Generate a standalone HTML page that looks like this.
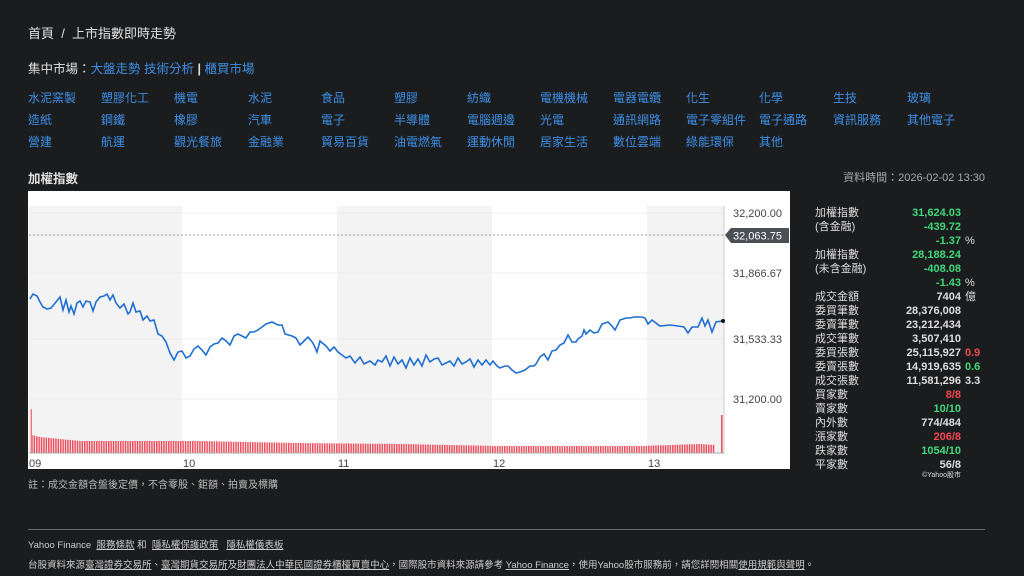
<!DOCTYPE html>
<html><head><meta charset="utf-8"><style>
*{margin:0;padding:0;box-sizing:border-box}
body{width:1024px;height:576px;background:#1b1c1e;font-family:"Liberation Sans","Noto Sans CJK TC",sans-serif;color:#e0e0e0;position:relative;overflow:hidden;font-size:12px}
.a{position:absolute;white-space:nowrap}
.b{color:#3d8fe6}
.sec{position:absolute;left:28px;top:89px;width:960px}
.sec span{position:absolute;color:#3d8fe6;font-size:12px}
.st{position:absolute;left:815px;top:206px;width:170px;font-size:11px}
.st div{height:14px;line-height:14px;position:relative}
.st .l{position:absolute;left:0;color:#ddd}
.st .v{position:absolute;right:24px;font-weight:bold;color:#ddd}
.st .x{position:absolute;left:150px;font-weight:bold;color:#ddd}
.g{color:#3fd87a!important}.r{color:#f0474f!important}
.ft{position:absolute;left:28px;font-size:9.5px;color:#ccc}
.ft u{color:#ccc}
</style></head><body>
<div class="a" style="left:28px;top:23px;font-size:13px">首頁 &nbsp;/&nbsp; 上市指數即時走勢</div>
<div class="a" style="left:28px;top:58px;font-size:12.5px">集中市場：<span class="b">大盤走勢</span> <span class="b">技術分析</span> <b>|</b> <span class="b">櫃買市場</span></div>
<div class="sec">
<span style="left:0;top:0">水泥窯製</span><span style="left:73px;top:0">塑膠化工</span><span style="left:146px;top:0">機電</span><span style="left:220px;top:0">水泥</span><span style="left:293px;top:0">食品</span><span style="left:366px;top:0">塑膠</span><span style="left:439px;top:0">紡織</span><span style="left:512px;top:0">電機機械</span><span style="left:585px;top:0">電器電纜</span><span style="left:658px;top:0">化生</span><span style="left:731px;top:0">化學</span><span style="left:805px;top:0">生技</span><span style="left:879px;top:0">玻璃</span>
<span style="left:0;top:22px">造紙</span><span style="left:73px;top:22px">鋼鐵</span><span style="left:146px;top:22px">橡膠</span><span style="left:220px;top:22px">汽車</span><span style="left:293px;top:22px">電子</span><span style="left:366px;top:22px">半導體</span><span style="left:439px;top:22px">電腦週邊</span><span style="left:512px;top:22px">光電</span><span style="left:585px;top:22px">通訊網路</span><span style="left:658px;top:22px">電子零組件</span><span style="left:731px;top:22px">電子通路</span><span style="left:805px;top:22px">資訊服務</span><span style="left:879px;top:22px">其他電子</span>
<span style="left:0;top:44px">營建</span><span style="left:73px;top:44px">航運</span><span style="left:146px;top:44px">觀光餐旅</span><span style="left:220px;top:44px">金融業</span><span style="left:293px;top:44px">貿易百貨</span><span style="left:366px;top:44px">油電燃氣</span><span style="left:439px;top:44px">運動休閒</span><span style="left:512px;top:44px">居家生活</span><span style="left:585px;top:44px">數位雲端</span><span style="left:658px;top:44px">綠能環保</span><span style="left:731px;top:44px">其他</span>
</div>
<div class="a" style="left:28px;top:168px;font-size:12.5px;font-weight:bold">加權指數</div>
<div class="a" style="right:39px;top:169px;font-size:11px;color:#aaa">資料時間：2026-02-02 13:30</div>

<svg class="a" style="left:28px;top:191px" width="762" height="278" viewBox="28 191 762 278">
<defs><pattern id="p" x="0" y="0" width="2.4" height="10" patternUnits="userSpaceOnUse"><rect width="1.5" height="10" fill="#ef5060"/></pattern></defs>
<rect x="28" y="191" width="762" height="278" fill="#fff"/>
<rect x="29" y="206" width="153" height="247" fill="#f3f3f3"/>
<rect x="337" y="206" width="155" height="247" fill="#f3f3f3"/>
<rect x="647" y="206" width="77" height="247" fill="#f3f3f3"/>
<g stroke="#eee"><line x1="29" y1="213" x2="724" y2="213"/><line x1="29" y1="273" x2="724" y2="273"/><line x1="29" y1="339" x2="724" y2="339"/><line x1="29" y1="399" x2="724" y2="399"/></g>
<line x1="29" y1="235" x2="724" y2="235" stroke="#999" stroke-dasharray="2,2"/>
<polygon fill="url(#p)" points="30,453 30,409 32,409 32,435 40,437 80,441 200,441 300,443 400,444 500,446 640,446 700,444 715,445 715,453"/>
<rect x="721" y="415" width="1.6" height="38" fill="#ef5060"/>
<line x1="29" y1="453" x2="724" y2="453" stroke="#aaa"/>
<line x1="724" y1="206" x2="724" y2="453" stroke="#ccc"/>
<polyline fill="none" stroke="#1f6fd1" stroke-width="1.6" points="30,299 33,294 37,296 40,302 43,307 47,309 51,308 56,302 60,297 63,310 66,300 69,312 71,306 74,314 77,303 80,301 83,307 86,301 90,302 93,311 96,302 100,297 104,296 107,294 110,300 113,295 116,303 120,308 124,304 128,314 130,312 133,303 136,312 140,311 143,320 147,316 150,321 154,320 158,334 162,336 166,342 170,353 174,360 178,352 182,351 186,358 190,356 194,349 198,346 202,350 206,355 210,347 214,344 218,343 222,338 226,341 230,345 234,336 238,334 242,336 246,338 250,332 254,332 258,330 262,327 266,324 272,322 278,325 282,325 285,334 292,336 296,338 300,345 304,341 308,337 313,343 317,352 320,341 326,346 330,351 334,347 338,352 342,355 346,358 350,356 355,363 360,357 364,364 370,361 375,365 378,360 382,362 386,356 390,366 394,357 398,364 402,360 406,368 410,358 414,365 418,359 422,366 426,355 430,362 434,359 438,358 442,365 446,363 450,361 454,366 458,358 462,364 466,362 470,359 474,367 478,360 482,365 486,360 490,365 493,361 497,366 500,368 505,366 508,366 512,370 516,373 520,372 525,370 530,366 534,366 536,364 540,357 544,354 548,360 552,351 556,350 560,345 564,343 568,335 572,342 576,342 578,339 582,336 584,330 586,334 590,330 594,333 598,332 602,324 608,322 612,326 615,330 620,320 626,318 630,318 634,317 642,317 645,318 648,324 652,320 660,326 670,325 678,326 684,327 688,333 692,327 698,327 702,318 705,326 708,320 712,332 716,322 722,321"/>
<circle cx="723" cy="321" r="2" fill="#111"/>
<g font-size="11" fill="#444" font-family="Liberation Sans,sans-serif"><text x="733" y="217">32,200.00</text><text x="733" y="277">31,866.67</text><text x="733" y="343">31,533.33</text><text x="733" y="403">31,200.00</text>
<text x="29" y="467">09</text><text x="183" y="467">10</text><text x="338" y="467">11</text><text x="493" y="467">12</text><text x="648" y="467">13</text></g>
<path d="M725,235 L731,228 L789,228 L789,243 L731,243 Z" fill="#4b4f56"/>
<text x="733" y="239.5" font-size="11" fill="#fff" font-family="Liberation Sans,sans-serif">32,063.75</text>
</svg>

<div class="st">
<div><span class="l">加權指數</span><span class="v g">31,624.03</span></div>
<div><span class="l">(含金融)</span><span class="v g">-439.72</span></div>
<div><span class="v g">-1.37</span><span class="x" style="font-weight:normal">%</span></div>
<div><span class="l">加權指數</span><span class="v g">28,188.24</span></div>
<div><span class="l">(未含金融)</span><span class="v g">-408.08</span></div>
<div><span class="v g">-1.43</span><span class="x" style="font-weight:normal">%</span></div>
<div><span class="l">成交金額</span><span class="v">7404</span><span class="x" style="font-weight:normal">億</span></div>
<div><span class="l">委買筆數</span><span class="v">28,376,008</span></div>
<div><span class="l">委賣筆數</span><span class="v">23,212,434</span></div>
<div><span class="l">成交筆數</span><span class="v">3,507,410</span></div>
<div><span class="l">委買張數</span><span class="v">25,115,927</span><span class="x r">0.9</span></div>
<div><span class="l">委賣張數</span><span class="v">14,919,635</span><span class="x g">0.6</span></div>
<div><span class="l">成交張數</span><span class="v">11,581,296</span><span class="x">3.3</span></div>
<div><span class="l">買家數</span><span class="v r">8/8</span></div>
<div><span class="l">賣家數</span><span class="v g">10/10</span></div>
<div><span class="l">內外數</span><span class="v">774/484</span></div>
<div><span class="l">漲家數</span><span class="v r">206/8</span></div>
<div><span class="l">跌家數</span><span class="v g">1054/10</span></div>
<div><span class="l">平家數</span><span class="v">56/8</span></div>
<div style="font-size:7px;height:8px;line-height:8px"><span class="v" style="font-weight:normal">©Yahoo股市</span></div>
</div>

<div class="a" style="left:28px;top:476px;font-size:10px;color:#bbb">註：成交金額含盤後定價，不含零股、鉅額、拍賣及標購</div>
<div class="a" style="left:28px;top:529px;width:957px;height:1px;background:#666"></div>
<div class="ft" style="top:537px">Yahoo Finance &nbsp;<u>服務條款</u> 和 &nbsp;<u>隱私權保護政策</u> &nbsp; <u>隱私權儀表板</u></div>
<div class="ft" style="top:557px">台股資料來源<u>臺灣證券交易所</u>、<u>臺灣期貨交易所</u>及<u>財團法人中華民國證券櫃檯買賣中心</u>，國際股市資料來源請參考 <u>Yahoo Finance</u>，使用Yahoo股市服務前，請您詳閱相關<u>使用規範與聲明</u>。</div>
</body></html>
